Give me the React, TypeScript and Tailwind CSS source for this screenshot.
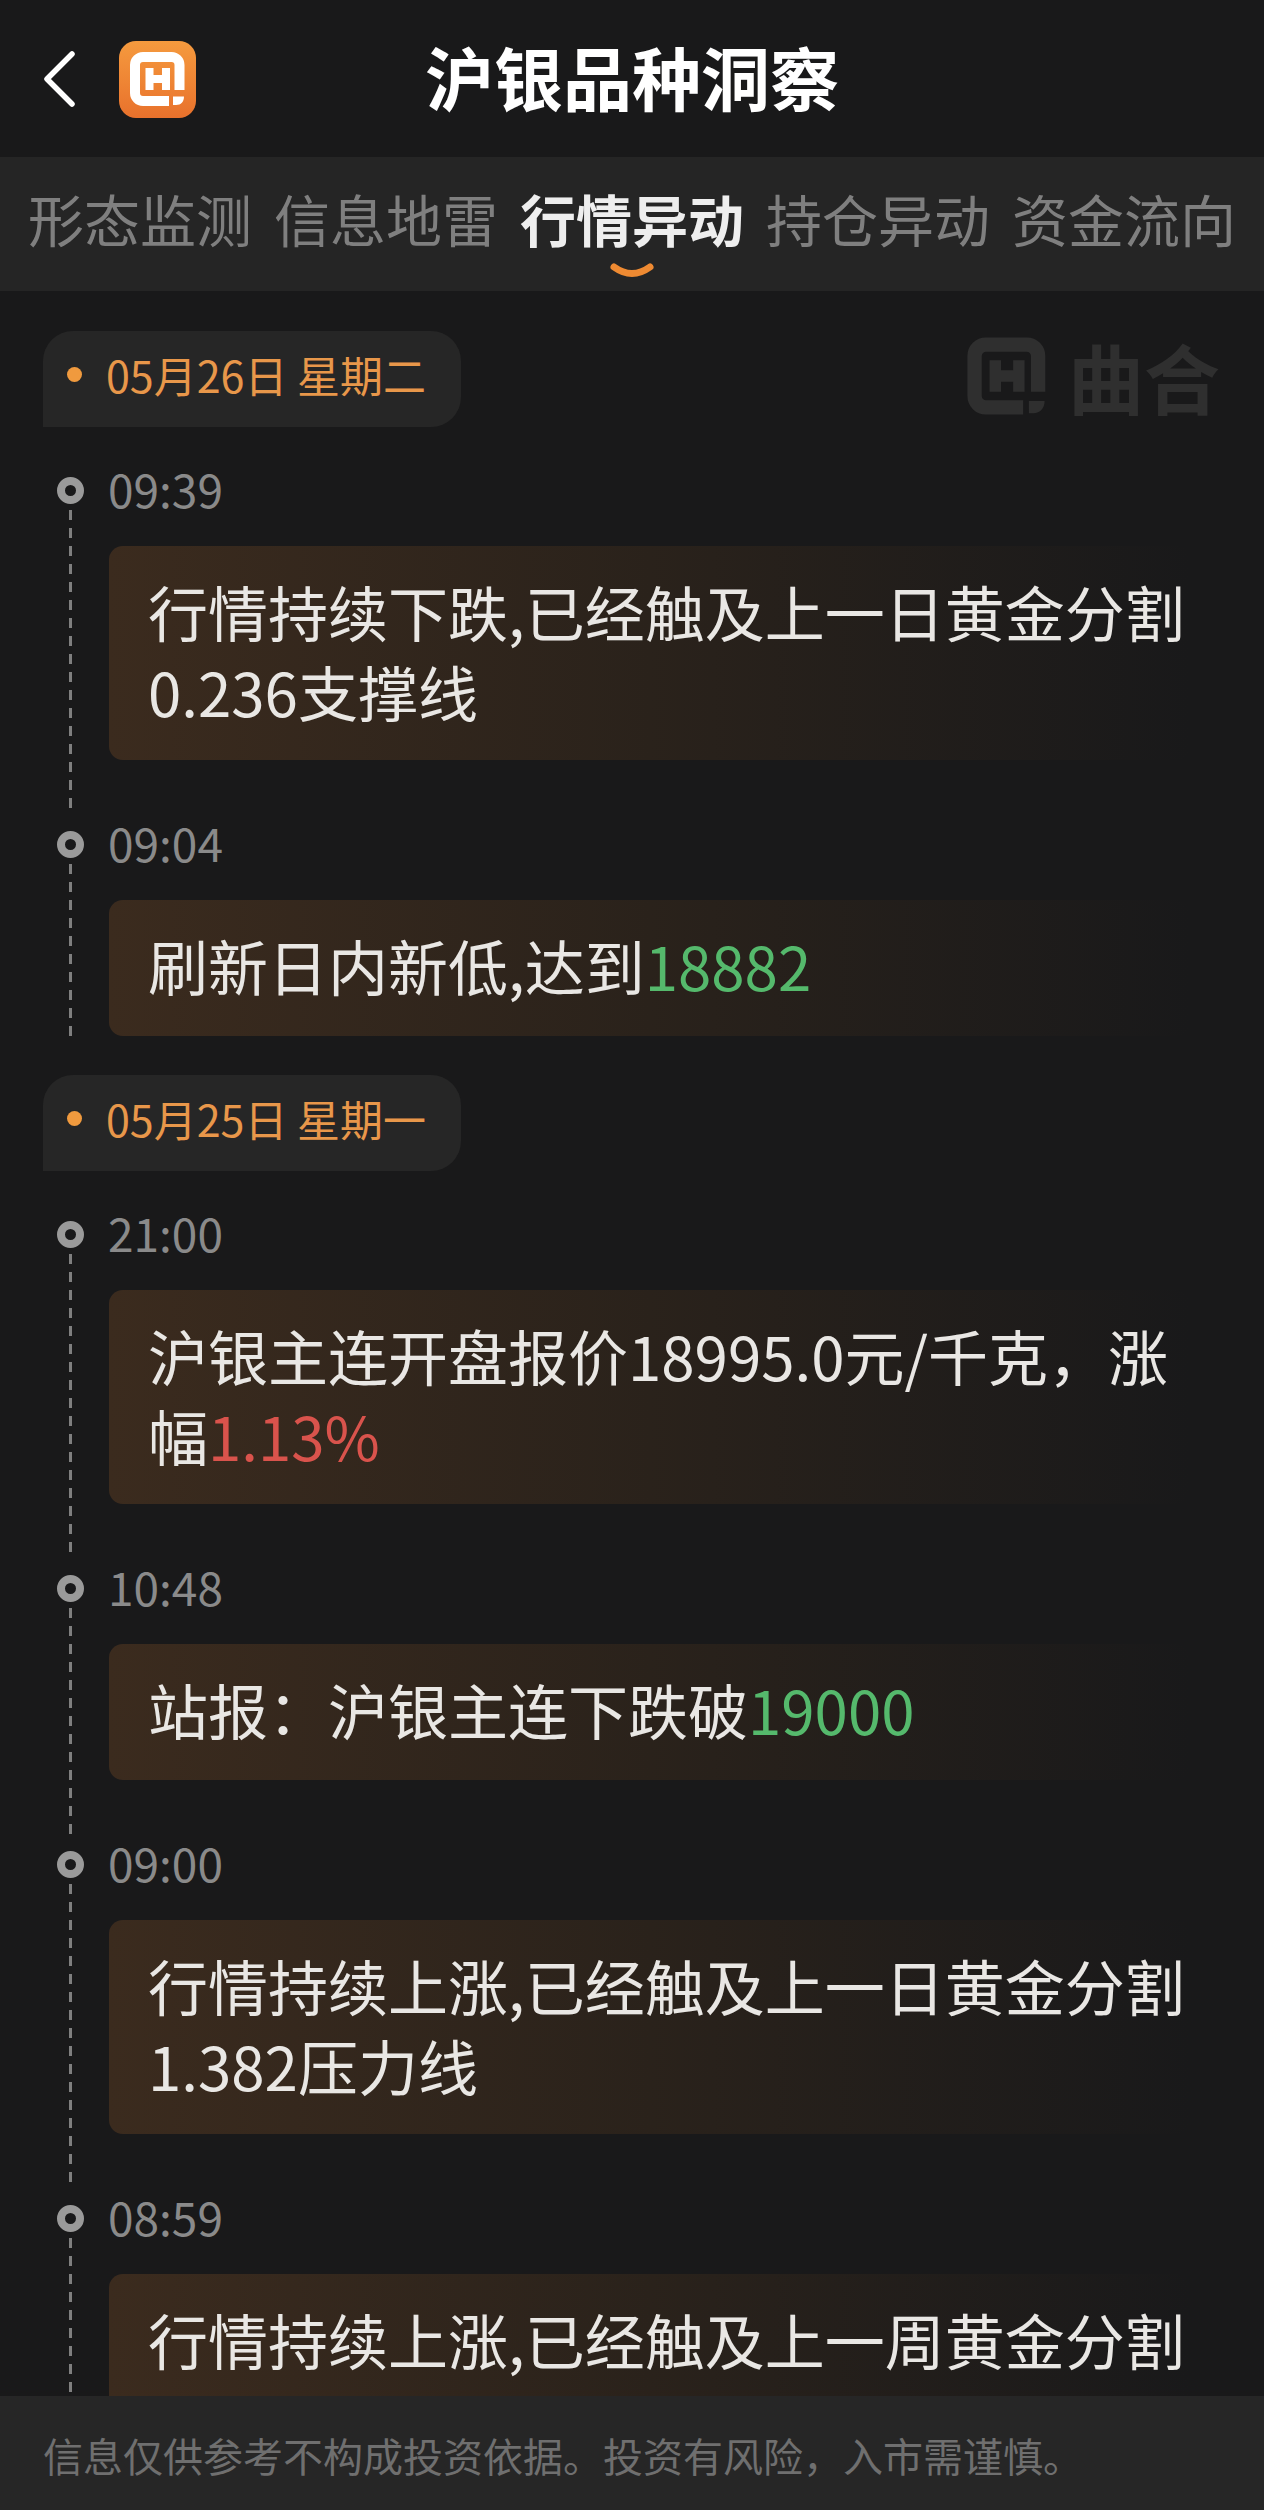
const FONT = "font-['Noto_Sans_CJK_SC','Noto_Sans',sans-serif]";

const TABS = ['形态监测', '信息地雷', '行情异动', '持仓异动', '资金流向'];

type Seg = { t: string; c?: 'up' | 'down' };
type Item = { time: string; lines: Seg[][] };
type Group = { date: string; items: Item[] };

const GROUPS: Group[] = [
  {
    date: '05月26日 星期二',
    items: [
      { time: '09:39', lines: [[{ t: '行情持续下跌,已经触及上一日黄金分割' }], [{ t: '0.236支撑线' }]] },
      { time: '09:04', lines: [[{ t: '刷新日内新低,达到' }, { t: '18882', c: 'down' }]] },
    ],
  },
  {
    date: '05月25日 星期一',
    items: [
      { time: '21:00', lines: [[{ t: '沪银主连开盘报价18995.0元/千克，涨' }], [{ t: '幅' }, { t: '1.13%', c: 'up' }]] },
      { time: '10:48', lines: [[{ t: '站报：沪银主连下跌破' }, { t: '19000', c: 'down' }]] },
      { time: '09:00', lines: [[{ t: '行情持续上涨,已经触及上一日黄金分割' }], [{ t: '1.382压力线' }]] },
      // la segunda línea queda tapada por el aviso de abajo
      { time: '08:59', lines: [[{ t: '行情持续上涨,已经触及上一周黄金分割' }], [{ t: '\u00a0' }]] },
    ],
  },
];

// the H mark, used on the app tile and in the watermark
function Mark({ className, viewBox }: { className: string; viewBox: string }) {
  return (
    <svg viewBox={viewBox} className={className} fill="none">
      <path d="M60.5 49V24a8 8 0 0 0-8-8H24a8 8 0 0 0-8 8v28a8 8 0 0 0 8 8h26" stroke="currentColor" strokeWidth="10" />
      <path d="M30.500 27v22M47 27v22M30 38h17" stroke="currentColor" strokeWidth="8" />
      <path d="M54 55.500h11c0 5-3 8.500-8 8.500h-3z" fill="currentColor" />
    </svg>
  );
}

function Entry({ item, last }: { item: Item; last: boolean }) {
  return (
    <div className="flex">
      <div className="ml-[56px] mr-[25px] flex w-[28px] flex-col items-center">
        <div className="mt-[15px] h-[27px] w-[27px] shrink-0 rounded-full border-[8px] border-[#9a9a9a] bg-[#19191a]" />
        <div className="mt-[6px] w-[3px] flex-1 bg-[repeating-linear-gradient(to_bottom,#7f7f7f_0,#7f7f7f_10px,transparent_10px,transparent_18px)]" />
      </div>
      <div className={`min-w-0 flex-1 pr-[74px] ${last ? '' : 'pb-[56px]'}`}>
        <div className="-ml-[1px] h-[56px] text-[46px] leading-[53px] text-[#8a8a8a]">{item.time}</div>
        <div className="mt-[28px] min-h-[136px] rounded-[14px] bg-linear-to-r from-[#3b2b1e] via-[#2a221b] to-[#19191a] pb-[29px] pl-[39px] pt-[25px] text-[60px] leading-[80px] text-[#e9e7e4]">
          {item.lines.map((line, i) => (
            <div key={i} className="whitespace-nowrap">
              {line.map((s, j) => (
                <span key={j} className={s.c === 'up' ? 'text-[#d9534c]' : s.c === 'down' ? 'text-[#55b96c]' : ''}>{s.t}</span>
              ))}
            </div>
          ))}
        </div>
      </div>
    </div>
  );
}

export default function App() {
  return (
    <div className={`relative flex h-[2510px] w-[1264px] flex-col overflow-hidden bg-[#19191a] ${FONT}`}>
      {/* Cabecera */}
      <div className="relative flex h-[157px] shrink-0 items-center justify-center pb-[4px]">
        <svg viewBox="0 0 40 64" className="absolute left-[40px] top-[47px] h-[64px] w-[40px]" fill="none">
          <path d="M32 7 7 32l25 25" stroke="#fff" strokeWidth="5.500" strokeLinecap="round" strokeLinejoin="round" />
        </svg>
        <div className="absolute left-[119px] top-[41px] flex h-[77px] w-[77px] items-center justify-center rounded-[17px] bg-linear-to-b from-[#f59a3e] to-[#e8712c] text-white">
          <Mark className="h-[77px] w-[77px]" viewBox="0 0 77 77" />
        </div>
        <h1 className="text-[69px] font-bold leading-none text-white">沪银品种洞察</h1>
      </div>

      {/* Tabs */}
      <div className="relative flex h-[134px] shrink-0 justify-center gap-[22px] bg-[#252525] pt-[26px]">
        {TABS.map((tab, i) => (
          <div key={tab} className={`relative text-[56px] leading-[70px] ${i === 2 ? 'font-bold text-[#eeeeee]' : 'text-[#7f7f7f]'}`}>
            {tab}
            {i === 2 && (
              <svg viewBox="0 0 44 20" className="absolute left-[90px] top-[79px] h-[20px] w-[44px]" fill="none">
                <path d="M4 5q18 13 36 0" stroke="#ee8a32" strokeWidth="7" strokeLinecap="round" />
              </svg>
            )}
          </div>
        ))}
      </div>

      {/* Lista */}
      <div className="relative flex-1 pt-[40px]">
        <div className="absolute right-[44px] top-[45px] flex items-center gap-[22px] text-[#2f2f2f]">
          <Mark className="h-[80px] w-[80px]" viewBox="10 11 56 54" />
          <span className="text-[76px] font-bold leading-none">曲合</span>
        </div>
        {GROUPS.map((g, gi) => (
          <div key={g.date} className={gi > 0 ? 'mt-[39px]' : ''}>
            <div className="mb-[35px] ml-[43px] flex h-[96px] w-[418px] items-center rounded-[30px] rounded-bl-none bg-[#262626] pb-[10px] pl-[24px]">
              <span className="mr-[24px] h-[15px] w-[15px] rounded-full bg-[#f09a3e]" />
              <span className="text-[43px] leading-none text-[#e8974a]">{g.date}</span>
            </div>
            {g.items.map((item, i) => (
              <Entry key={item.time} item={item} last={i === g.items.length - 1} />
            ))}
          </div>
        ))}
      </div>

      {/* Aviso legal sobre la lista */}
      <div className="absolute bottom-0 left-0 flex h-[114px] w-full items-center bg-[#262626] pl-[43px] pt-[3px] text-[40px] text-[#6f6f6f]">
        信息仅供参考不构成投资依据。投资有风险，入市需谨慎。
      </div>
    </div>
  );
}
